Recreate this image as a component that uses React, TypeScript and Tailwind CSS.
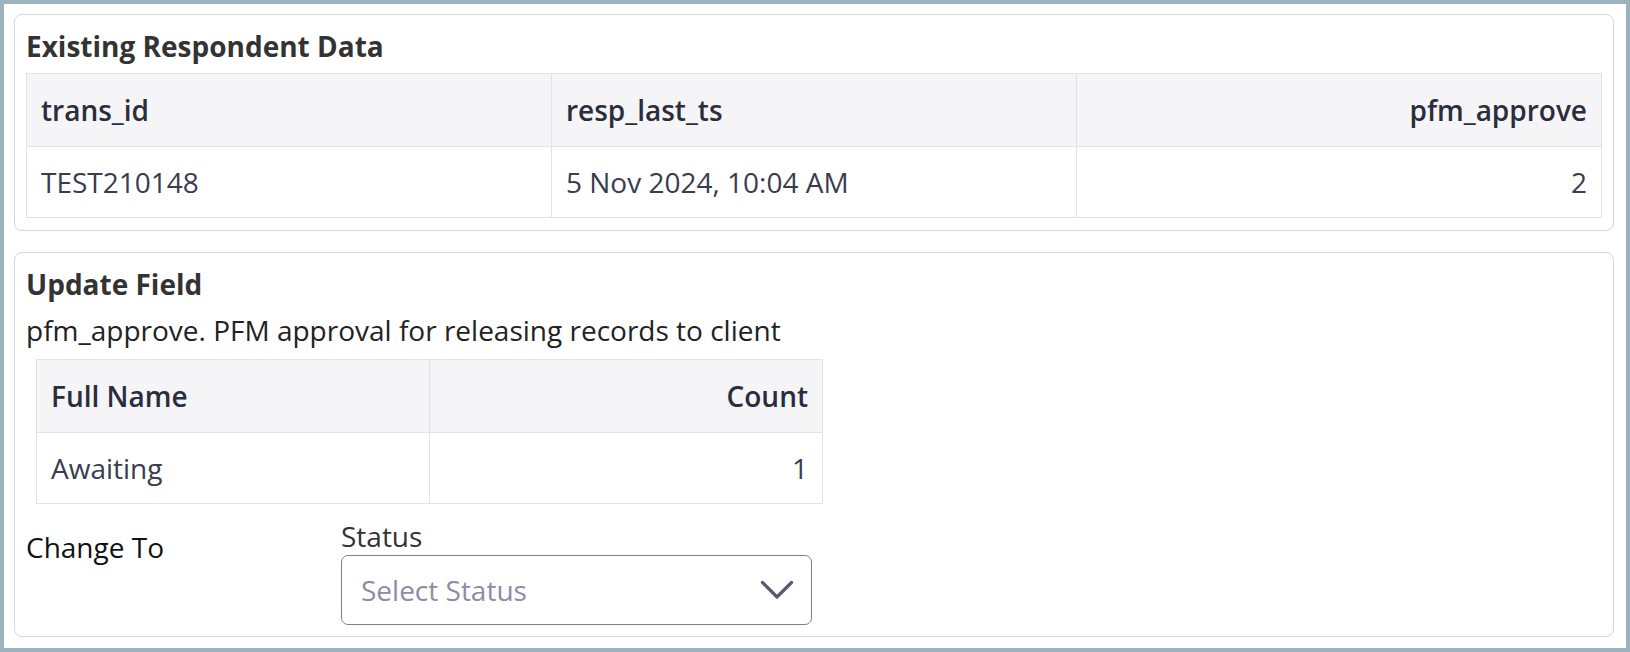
interface Column {
  key: string;
  label: string;
  align?: "left" | "right";
}

const respondentColumns: Column[] = [
  { key: "trans_id", label: "trans_id" },
  { key: "resp_last_ts", label: "resp_last_ts" },
  { key: "pfm_approve", label: "pfm_approve", align: "right" },
];

const respondentRows = [
  { trans_id: "TEST210148", resp_last_ts: "5 Nov 2024, 10:04 AM", pfm_approve: "2" },
];

const countColumns: Column[] = [
  { key: "name", label: "Full Name" },
  { key: "count", label: "Count", align: "right" },
];

const countRows = [{ name: "Awaiting", count: "1" }];

const DataTable = ({
  columns,
  rows,
  className = "",
}: {
  columns: Column[];
  rows: Record<string, string>[];
  className?: string;
}) => (
  <table className={`table-fixed border-collapse ${className}`}>
    <thead>
      <tr className="bg-[#f5f5f7]">
        {columns.map((col) => (
          <th
            key={col.key}
            className={`border border-[#e3e3e6] px-[14px] py-[17px] text-[28px] leading-[38px] font-semibold text-[#2b2d3d] ${
              col.align === "right" ? "text-right" : "text-left"
            }`}
          >
            {col.label}
          </th>
        ))}
      </tr>
    </thead>
    <tbody>
      {rows.map((row, index) => (
        <tr key={index}>
          {columns.map((col) => (
            <td
              key={col.key}
              className={`border border-[#e3e3e6] px-[14px] py-[16px] text-[28px] leading-[38px] text-[#3a3c4f] ${
                col.align === "right" ? "text-right" : "text-left"
              }`}
            >
              {row[col.key]}
            </td>
          ))}
        </tr>
      ))}
    </tbody>
  </table>
);

// chevron in the select, wider and heavier than the lucide one
const Chevron = () => (
  <svg width="34" height="20" viewBox="0 0 34 20" fill="none" className="text-[#585b72]">
    <path
      d="M2.5 2.5 L17 17 L31.5 2.5"
      stroke="currentColor"
      strokeWidth="3.2"
      strokeLinecap="round"
      strokeLinejoin="round"
    />
  </svg>
);

export default function App() {
  return (
    <div className="h-[652px] w-[1630px] border-4 border-[#9cb3bf] bg-white pl-[10px] pr-[12px] pt-[10px] font-['Open_Sans',sans-serif]">
      {/* Existing data */}
      <div className="rounded-[8px] border border-[#d6d6d6] px-[11px] py-[12px]">
        <h2 className="text-[28px] leading-[38px] font-bold text-[#333333]">
          Existing Respondent Data
        </h2>
        <DataTable
          columns={respondentColumns}
          rows={respondentRows}
          className="mt-[8px] w-full"
        />
      </div>

      {/* Update form */}
      <div className="mt-[21px] rounded-[8px] border border-[#d6d6d6] px-[11px] pt-[12px] pb-[11px]">
        <h2 className="text-[28px] leading-[38px] font-bold text-[#333333]">
          Update Field
        </h2>
        <p className="mt-[8px] text-[28px] leading-[38px] text-[#222222]">
          pfm_approve. PFM approval for releasing records to client
        </p>
        <DataTable
          columns={countColumns}
          rows={countRows}
          className="mt-[10px] ml-[10px] w-[787px]"
        />
        <div className="mt-[13px] flex">
          <div className="w-[315px] pt-[11px] text-[28px] leading-[38px] text-[#111111]">
            Change To
          </div>
          <div className="flex flex-col">
            <label className="text-[28px] leading-[38px] text-[#333333]">
              Status
            </label>
            <button className="flex h-[70px] w-[471px] items-center justify-between rounded-[7px] border-[1.5px] border-[#7b7f96] pl-[19px] pr-[17px] text-[28px] text-[#8b8da3]">
              <span>Select Status</span>
              <Chevron />
            </button>
          </div>
        </div>
      </div>
    </div>
  );
}
